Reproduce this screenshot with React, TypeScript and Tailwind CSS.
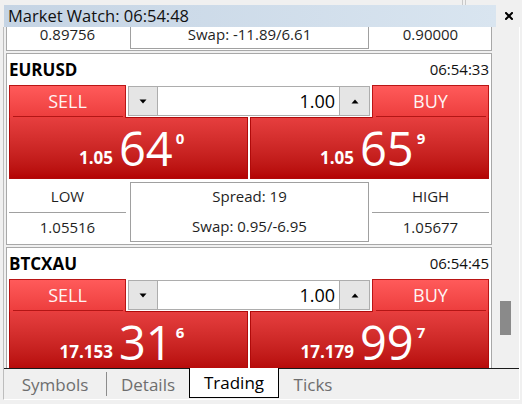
import React from "react";

type Quote = { small: string; big: string; sup: string };
type Item = {
  symbol: string;
  time: string;
  sell: Quote;
  buy: Quote;
  low: string;
  high: string;
  spread: string;
  swap: string;
  volume: string;
};

const items: Item[] = [
  {
    symbol: "EURUSD",
    time: "06:54:33",
    sell: { small: "1.05", big: "64", sup: "0" },
    buy: { small: "1.05", big: "65", sup: "9" },
    low: "1.05516",
    high: "1.05677",
    spread: "Spread: 19",
    swap: "Swap: 0.95/-6.95",
    volume: "1.00",
  },
  {
    symbol: "BTCXAU",
    time: "06:54:45",
    sell: { small: "17.153", big: "31", sup: "6" },
    buy: { small: "17.179", big: "99", sup: "7" },
    low: "",
    high: "",
    spread: "",
    swap: "",
    volume: "1.00",
  },
];

function SideButton({ label }: { label: string }) {
  return (
    <div className="relative z-10 w-[117px] h-[33px] shrink-0 border border-b-0 border-[#b91515] bg-linear-to-b from-[#ff5a5a] to-[#ec3c3c] flex flex-col">
      <div className="flex-1 flex items-center justify-center text-[18px] leading-none text-[#fff4f4]">
        {label}
      </div>
      <div className="ml-[3px] mr-[2px] mb-px h-px bg-[#b31616]" />
    </div>
  );
}

function TriDown() {
  return (
    <svg width="8" height="5" viewBox="0 0 8 5">
      <polygon points="0.5,0.5 7.5,0.5 4,4.5" fill="#000" />
    </svg>
  );
}

function TriUp() {
  return (
    <svg width="8" height="5" viewBox="0 0 8 5">
      <polygon points="0.5,4.5 7.5,4.5 4,0.5" fill="#000" />
    </svg>
  );
}

function Volume({ value }: { value: string }) {
  return (
    <div className="flex-1 px-[2px] pt-px">
      <div className="h-[30px] flex border border-[#adadad] bg-white">
        <div className="w-[29px] bg-[#e5e5e5] border-r border-[#adadad] flex items-center justify-center">
          <TriDown />
        </div>
        <div className="flex-1 flex items-center justify-end pr-[4px] text-[18px] leading-none text-black">
          {value}
        </div>
        <div className="w-[30px] bg-[#e5e5e5] border-l border-[#adadad] flex items-center justify-center">
          <TriUp />
        </div>
      </div>
    </div>
  );
}

function PriceBlock({ q }: { q: Quote }) {
  return (
    <div className="flex-1 h-[62px] border border-[#b00a0a] bg-linear-to-b from-[#e63e3e] to-[#b40404] flex items-start text-white whitespace-nowrap">
      <span className="mt-[31px] w-[103px] text-right text-[17px] font-bold leading-none">
        {q.small}
      </span>
      <span className="mt-[7px] ml-[6px] text-[47px] leading-none">{q.big}</span>
      <span className="mt-[13px] ml-[3px] text-[15px] font-bold leading-none">{q.sup}</span>
    </div>
  );
}

function StatCell({ label, value, className = "" }: { label: string; value: string; className?: string }) {
  return (
    <div className={`w-[117px] shrink-0 flex flex-col ${className}`}>
      <div className="h-[32px] border-b border-[#a0a0a0] flex items-center justify-center">
        {label}
      </div>
      <div className="flex-1 flex items-center justify-center pb-[2px]">{value}</div>
    </div>
  );
}

function Card({ item, showStats = true }: { item: Item; showStats?: boolean }) {
  return (
    <div className="bg-white border border-[#a8a8a8] px-[2px] pb-px shrink-0">
      <div className="h-[31px] flex items-center justify-between">
        <span className="text-[17px] font-bold text-black leading-none">{item.symbol}</span>
        <span className="text-[15px] text-[#111] leading-none">{item.time}</span>
      </div>
      <div className="h-[32px] flex items-start">
        <SideButton label="SELL" />
        <Volume value={item.volume} />
        <SideButton label="BUY" />
      </div>
      <div className="flex gap-[2px]">
        <PriceBlock q={item.sell} />
        <PriceBlock q={item.buy} />
      </div>
      {showStats && (
        <div className="mt-[2px] h-[62px] flex text-[15px] text-[#1f1f1f] leading-none">
          <StatCell label="LOW" value={item.low} />
          <div className="ml-[4px] mt-px w-[239px] h-[60px] border border-[#a0a0a0] flex flex-col items-center pt-[6px] gap-[15px]">
            <span>{item.spread}</span>
            <span>{item.swap}</span>
          </div>
          <StatCell label="HIGH" value={item.high} className="ml-[3px]" />
        </div>
      )}
    </div>
  );
}

/* the bottom of the previous item, scrolled mostly out of view */
function Remnant({ low, swap, high }: { low: string; swap: string; high: string }) {
  return (
    <div className="h-[24px] shrink-0 bg-white border border-t-0 border-[#a8a8a8] px-[2px] flex items-start text-[15px] text-[#1f1f1f] leading-[14px]">
      <div className="w-[117px] h-[23px] flex justify-center">{low}</div>
      <div className="ml-[4px] w-[239px] h-[22px] border-l border-r border-b border-[#a0a0a0] flex justify-center">
        {swap}
      </div>
      <div className="ml-[3px] w-[117px] h-[23px] flex justify-center">{high}</div>
    </div>
  );
}

export default function App() {
  return (
    <div className="w-[522px] h-[404px] overflow-hidden bg-[#f0f0f0] font-['Open_Sans',sans-serif] select-none">
      {/* top strip */}
      <div className="h-[5px] flex">
        <div className="w-[462px]" />
        <div className="w-[4px] border-l border-r border-[#c9c9c9]" />
      </div>
      {/* title row */}
      <div className="h-[22px] flex">
        <div className="ml-[4px] w-[492px] bg-linear-to-r from-[#c5d4e4] to-[#d9e5f0] flex items-center pl-[4px] text-[16.5px] text-[#111] leading-none">
          Market Watch: 06:54:48
        </div>
        <div className="flex-1 flex items-center justify-center pr-[1px]">
          <svg width="8" height="8" viewBox="0 0 8 8">
            <path d="M1 1 L7 7 M7 1 L1 7" stroke="#000" strokeWidth="2" strokeLinecap="square" />
          </svg>
        </div>
      </div>
      {/* window body */}
      <div className="ml-[3px] w-[517px] border-l border-[#bdbdbd] border-r border-r-white border-b border-b-white">
        <div className="h-[341px] flex">
          <div className="ml-[2px] w-[486px] overflow-hidden flex flex-col gap-[2px]">
            <Remnant low="0.89756" swap="Swap: -11.89/6.61" high="0.90000" />
            <Card item={items[0]} />
            <Card item={items[1]} showStats={false} />
          </div>
          <div className="flex-1">
            <div className="ml-[8px] mt-[274px] w-[11px] h-[34px] bg-[#8a8a8a]" />
          </div>
        </div>
        {/* tabs */}
        <div className="h-[31px] border-t border-[#1a1a1a] flex text-[17px] leading-none">
          <div className="w-[102px] flex items-center justify-center text-[#6e6e6e]">Symbols</div>
          <div className="w-px h-[24px] mt-[3px] bg-[#8c8c8c]" />
          <div className="w-[82px] flex items-center justify-center text-[#6e6e6e]">Details</div>
          <div className="-mt-px w-[90px] h-[30px] bg-white border-l border-r border-b border-black flex items-center justify-center text-black">
            Trading
          </div>
          <div className="w-[68px] flex items-center justify-center text-[#6e6e6e]">Ticks</div>
        </div>
      </div>
    </div>
  );
}
